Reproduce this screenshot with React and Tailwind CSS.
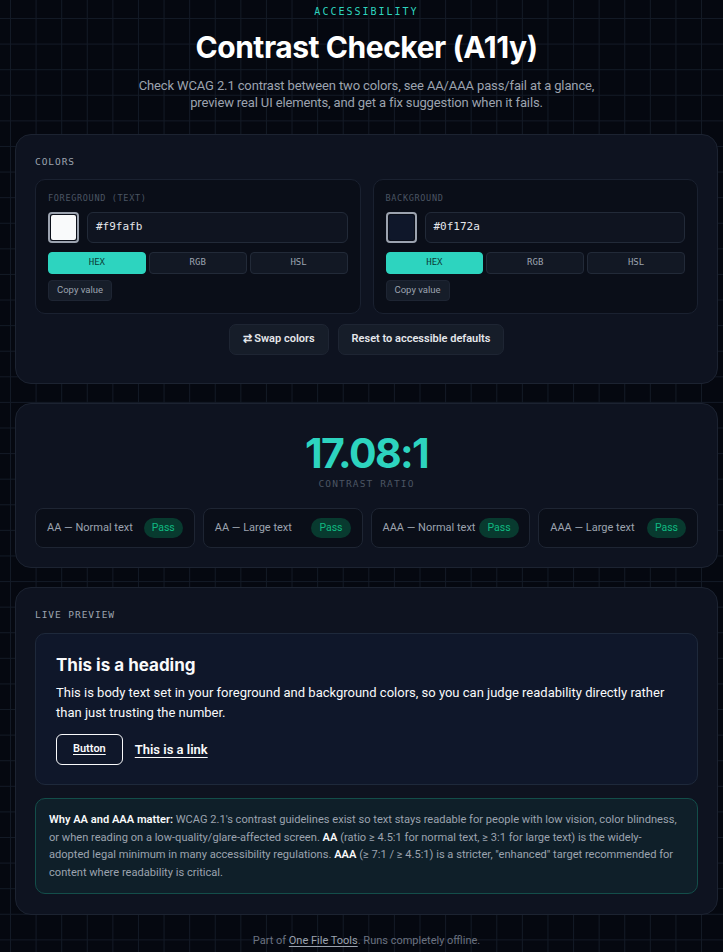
import { useState } from "react";

const mono = "font-['DejaVu_Sans_Mono','Liberation_Mono',monospace]";
const sans = "font-['Roboto','Noto_Sans',sans-serif]";
const display = "font-['Inter','Noto_Sans',sans-serif]";

function ColorPanel({ label, value, swatch }) {
  const [mode, setMode] = useState("HEX");
  return (
    <div className="flex-1 rounded-[10px] border border-[#1a2130] bg-[#0a0e18] px-3 pt-[12px] pb-[12px]">
      <div className={`${mono} text-[8.5px] leading-[12px] tracking-[0.08em] text-[#4b5563] uppercase`}>{label}</div>
      <div className="mt-[8px] flex gap-2">
        <div className="h-[31px] w-[31px] shrink-0 rounded-[4px] border-2 border-[#9ca3af] p-[1px]">
          <div className="h-full w-full rounded-[2px]" style={{ background: swatch }} />
        </div>
        <div className={`${mono} flex h-[31px] flex-1 items-center rounded-[6px] border border-[#222a38] bg-[#0f1420] px-[8px] text-[11px] text-[#e5e7eb]`}>
          {value}
        </div>
      </div>
      <div className="mt-[9px] grid grid-cols-3 gap-[3px]">
        {["HEX", "RGB", "HSL"].map((m) => (
          <button
            key={m}
            onClick={() => setMode(m)}
            className={`${mono} h-[22px] rounded-[4px] border text-[9px] ${
              mode === m
                ? "border-[#2dd4bf] bg-[#2dd4bf] text-[#0b3b36]"
                : "border-[#222a38] bg-[#121824] text-[#9ca3af]"
            }`}
          >
            {m}
          </button>
        ))}
      </div>
      <button className="mt-[6px] block h-[21px] rounded-[4px] border border-[#1e2533] bg-[#161d29] px-[8px] text-[9.5px] text-[#9ca3af]">
        Copy value
      </button>
    </div>
  );
}

function Level({ name }) {
  return (
    <div className="flex h-[40px] items-center justify-between gap-1 rounded-[8px] border border-[#1e2533] bg-[#0a0e18] px-[11px]">
      <span className="text-[11px] whitespace-nowrap text-[#9ca3af]">{name}</span>
      <span className="rounded-full bg-[#083a2f] px-[8px] py-[2px] text-[10.5px] text-[#10b981]">Pass</span>
    </div>
  );
}

export default function App() {
  return (
    <div
      className={`${sans} min-h-screen bg-[#050810] bg-[linear-gradient(to_right,#131a26_1px,transparent_1px),linear-gradient(to_bottom,#131a26_1px,transparent_1px)] bg-[size:25.6px_25.6px] bg-[position:10px_18px] pl-[15px] pr-[5px] pb-[8px]`}
    >
      {/* Header */}
      <header className="pt-[4px] text-center">
        <div className={`${mono} text-[10px] tracking-[0.2em] text-[#2dd4bf]`}>ACCESSIBILITY</div>
        <h1 className={`${display} mt-[10px] text-[30px] leading-[36px] font-bold tracking-[-0.015em] text-white`}>Contrast Checker (A11y)</h1>
        <p className="mx-auto mt-[12px] max-w-[480px] text-[13px] leading-[17px] tracking-[-0.01em] text-[#9ca3af]">
          Check WCAG 2.1 contrast between two colors, see AA/AAA pass/fail at a glance, preview real UI elements, and get a fix suggestion when it fails.
        </p>
      </header>

      {/* Colors */}
      <section className="mt-[23px] rounded-[16px] border border-[#1c2331] bg-[#0e1320] px-[19px] pt-[21px] pb-[28px]">
        <h2 className={`${mono} text-[9.5px] leading-[12px] tracking-[0.1em] text-[#9ca3af]`}>COLORS</h2>
        <div className="mt-[11px] flex gap-[12px]">
          <ColorPanel label="Foreground (text)" value="#f9fafb" swatch="#f9fafb" />
          <ColorPanel label="Background" value="#0f172a" swatch="#0f172a" />
        </div>
        <div className="mt-[10px] flex justify-center gap-[9px]">
          <button className="h-[31px] rounded-[7px] border border-[#1e2533] bg-[#161d29] px-[13px] text-[11px] font-semibold text-[#e5e7eb]">
            ⇄ Swap colors
          </button>
          <button className="h-[31px] rounded-[7px] border border-[#1e2533] bg-[#161d29] px-[13px] text-[11px] font-semibold text-[#e5e7eb]">
            Reset to accessible defaults
          </button>
        </div>
      </section>

      {/* Ratio */}
      <section className="mt-[19px] rounded-[16px] border border-[#1c2331] bg-[#0e1320] px-[19px] pt-[27px] pb-[19px]">
        <div className={`${display} text-center text-[41px] leading-[44px] font-bold tracking-[-0.04em] text-[#2dd4bf]`}>17.08:1</div>
        <div className={`${mono} mt-[3px] text-center text-[9.5px] leading-[12px] tracking-[0.12em] text-[#4b5563]`}>CONTRAST RATIO</div>
        <div className="mt-[18px] grid grid-cols-4 gap-[8px]">
          <Level name="AA — Normal text" />
          <Level name="AA — Large text" />
          <Level name="AAA — Normal text" />
          <Level name="AAA — Large text" />
        </div>
      </section>

      {/* Preview */}
      <section className="mt-[19px] rounded-[16px] border border-[#1c2331] bg-[#0e1320] px-[19px] pt-[21px] pb-[20px]">
        <h2 className={`${mono} text-[9.5px] leading-[12px] tracking-[0.1em] text-[#9ca3af]`}>LIVE PREVIEW</h2>
        <div className="mt-[12px] rounded-[10px] border border-[#1e293b] bg-[#0f172a] px-[20px] pt-[20px] pb-[19px] text-[#f9fafb]">
          <h3 className={`${display} text-[17px] leading-[22px] font-bold`}>This is a heading</h3>
          <p className="mt-[7px] text-[13px] leading-[20px]">
            This is body text set in your foreground and background colors, so you can judge readability directly rather than just trusting the number.
          </p>
          <div className="mt-[11px] flex items-center gap-[12px]">
            <button className="h-[31px] rounded-[6px] border border-[#f9fafb] px-[16px] text-[11px] font-semibold underline underline-offset-2">
              Button
            </button>
            <a href="#" className="text-[13px] font-semibold underline underline-offset-3">This is a link</a>
          </div>
        </div>

        <div className="mt-[13px] rounded-[10px] border border-[#134e4a] bg-[#0f1f29] pl-[13px] pr-[17px] pt-[12px] pb-[11px] text-[11.1px] leading-[17.7px] text-[#9ca3af]">
          <b className="font-semibold text-[#f9fafb]">Why AA and AAA matter:</b> WCAG 2.1's contrast guidelines exist so text stays readable for people with low vision, color blindness, or when reading on a low-quality/glare-affected screen.{" "}
          <b className="font-semibold text-[#f9fafb]">AA</b> (ratio ≥ 4.5:1 for normal text, ≥ 3:1 for large text) is the widely-adopted legal minimum in many accessibility regulations.{" "}
          <b className="font-semibold text-[#f9fafb]">AAA</b> (≥ 7:1 / ≥ 4.5:1) is a stricter, "enhanced" target recommended for content where readability is critical.
        </div>
      </section>

      <footer className="mt-[18px] text-center text-[11px] text-[#6b7280]">
        Part of <a href="#" className="text-[#9ca3af] underline underline-offset-2">One File Tools</a>. Runs completely offline.
      </footer>
    </div>
  );
}
